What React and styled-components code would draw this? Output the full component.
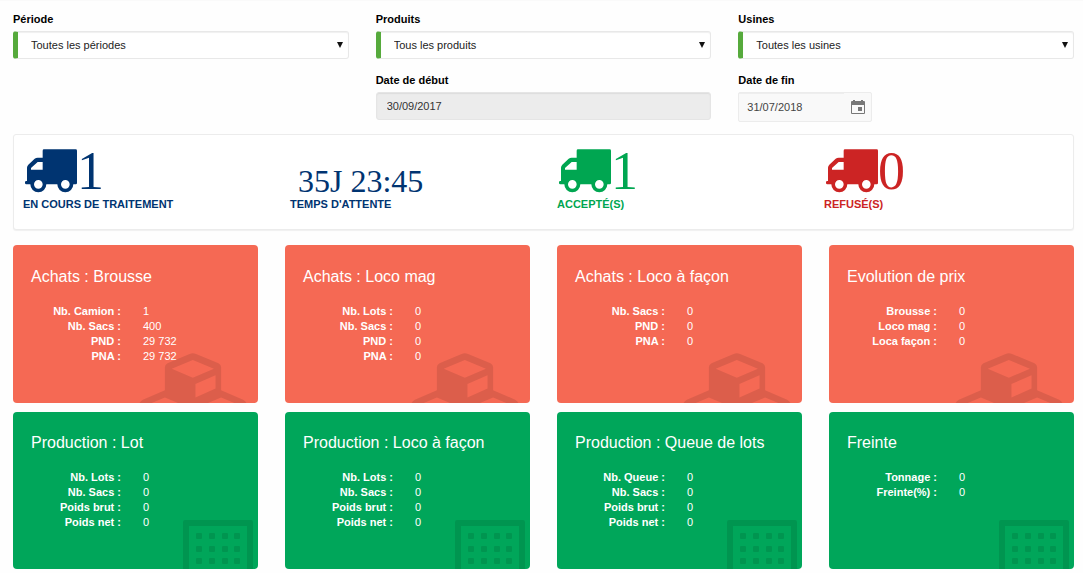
import React from "react";
import styled, { createGlobalStyle } from "styled-components";

const GlobalStyle = createGlobalStyle`
  * { box-sizing: border-box; }
  body {
    margin: 0;
    background: #fff;
    color: #000;
    font-family: "Liberation Sans", Arial, sans-serif;
    font-size: 11px;
    line-height: 15px;
  }
`;

const Page = styled.main`
  padding: 11px 9px 4px 13px;
  background: #fefefe;
  border-top: 1px solid #fafafa;
`;

const Filters = styled.form`
  display: grid;
  grid-template-columns: repeat(3, 1fr);
  column-gap: 27px;
  row-gap: 14px;
`;

const Field = styled.div`
  display: flex;
  flex-direction: column;
  align-items: stretch;
  gap: 5px;
  grid-column: ${(p) => p.$column};
`;

const FieldLabel = styled.label`
  font-weight: bold;
  line-height: 14px;
`;

const SelectBox = styled.div`
  display: grid;
  grid-template-columns: 1fr 12px;
  align-items: center;
  height: 28px;
  border: 1px solid #e8e8e8;
  border-left: 5px solid #56aa3c;
  border-radius: 3px;
  background: #fff;
  box-shadow: inset 0 1px 1px #f0f0f0;
`;

const Select = styled.select`
  appearance: none;
  grid-area: 1 / 1 / 2 / 3;
  width: 100%;
  height: 26px;
  padding: 0 20px 0 13px;
  border: 0;
  background: transparent;
  color: #222;
  font: inherit;
`;

const Arrow = styled.svg`
  grid-area: 1 / 2 / 2 / 3;
  width: 8px;
  height: 8px;
  pointer-events: none;
`;

const ReadOnlyInput = styled.input`
  width: 100%;
  height: 28px;
  padding: 0 10px;
  border: 1px solid #e5e5e5;
  border-radius: 3px;
  background: #ececec;
  box-shadow: inset 0 1px 1px #dddddd;
  color: #333;
  font: inherit;
`;

const DateBox = styled.div`
  display: flex;
  align-items: center;
  width: 134px;
  height: 30px;
  border: 1px solid #ececec;
  border-radius: 2px;
  background: #f9f9f9;
`;

const DateInput = styled.input`
  width: 105px;
  height: 28px;
  padding: 0 8px;
  border: 0;
  background: transparent;
  box-shadow: inset 0 1px 0 #eeeeee;
  color: #444;
  font: inherit;
`;

const CalendarButton = styled.button`
  display: flex;
  align-items: center;
  justify-content: center;
  width: 27px;
  height: 28px;
  padding: 0;
  border: 0;
  background: none;
`;

const Stats = styled.section`
  display: grid;
  grid-template-columns: 267fr 267fr 267fr 249fr;
  margin-top: 12px;
  padding: 14px 0 17px 9px;
  border: 1px solid #ececec;
  border-radius: 3px;
  background: #fff;
  box-shadow: 0 1px 1px #f0f0f0;
`;

const Stat = styled.div`
  color: ${(p) => p.$color};
`;

const StatFigure = styled.div`
  display: flex;
  align-items: flex-end;
  height: 44px;
  padding-left: ${(p) => (p.$plain ? 8 : 2)}px;
  font-family: "Liberation Serif", "Times New Roman", serif;
`;

const Count = styled.span`
  font-size: 54px;
  line-height: 44px;
`;

const Duration = styled.span`
  font-size: 32px;
  line-height: 24px;
`;

const StatLabel = styled.div`
  margin-top: 4px;
  font-weight: bold;
`;

const Cards = styled.section`
  display: grid;
  grid-template-columns: repeat(4, 1fr);
  gap: 9px 27px;
  margin-top: 15px;
`;

const Card = styled.article`
  position: relative;
  overflow: hidden;
  min-height: ${(p) => (p.$tone === "coral" ? 158 : 157)}px;
  padding: ${(p) => (p.$tone === "coral" ? 22 : 21)}px 18px;
  border-radius: 4px;
  background: ${(p) => (p.$tone === "coral" ? "#f56954" : "#00a65a")};
  color: #fff;
`;

const CardTitle = styled.h2`
  margin: 0 0 17px;
  font-size: 16px;
  font-weight: normal;
  line-height: 20px;
`;

const Data = styled.table`
  position: relative;
  z-index: 1;
  border-collapse: collapse;

  th {
    width: 90px;
    padding: 0;
    text-align: right;
    white-space: nowrap;
  }

  td {
    padding: 0 0 0 22px;
    white-space: nowrap;
  }
`;

const Watermark = styled.svg`
  position: absolute;
  right: ${(p) => (p.$tone === "coral" ? 11 : 5)}px;
  bottom: 0;
  fill: #000;
  fill-opacity: 0.1;
`;

const Truck = () => (
  <svg width="52" height="44" viewBox="0 0 156 132" aria-hidden="true">
    <path
      fill="currentColor"
      fillRule="evenodd"
      d="M57 1H152Q156 1 156 5V102Q156 106 152 106H145A24 24 0 0 1 97 106H64A24 24 0 0 1 16 106H4Q0 106 0 102V99Q0 96 4 96H6V56Q6 51 10 47L29 29Q33 26 38 26H53V5Q53 1 57 1ZM53 39H38L18 57V62H53ZM40 93A13 13 0 1 0 40 119A13 13 0 1 0 40 93ZM121 93A13 13 0 1 0 121 119A13 13 0 1 0 121 93Z"
    />
  </svg>
);

const CubesMark = () => (
  <Watermark $tone="coral" width="108" height="50" viewBox="0 0 325 152" aria-hidden="true">
    <path
      fillRule="evenodd"
      d="M0 152Q3 146 10 142L77 113V43Q77 35 85 31L152 3Q162-1 172 3L240 31Q248 35 248 43V113L315 142Q322 146 325 152H288L248 135L208 152H117L77 135L37 152ZM98 48L162 75L226 48L162 21ZM170 94V135L231 108V68Z"
    />
  </Watermark>
);

const BuildingMark = () => (
  <Watermark $tone="green" width="70" height="49" viewBox="0 0 70 49" aria-hidden="true">
    <path fillRule="evenodd" d="M2 0H68Q70 0 70 2V49H64V6H6V49H0V2Q0 0 2 0Z" />
    {[13, 26, 38].map((y) =>
      [13, 26, 39, 51].map((x) => (
        <rect key={`${x}-${y}`} x={x} y={y} width="6" height="6" rx="1" />
      ))
    )}
  </Watermark>
);

const CalendarIcon = () => (
  <svg width="14" height="14" viewBox="0 0 14 14" aria-hidden="true">
    <path
      fill="#777"
      fillRule="evenodd"
      d="M2 0H4V1H10V0H12V1H13Q14 1 14 2V13Q14 14 13 14H1Q0 14 0 13V2Q0 1 1 1H2ZM1 5V13H13V5ZM7 7H11V11H7Z"
    />
  </svg>
);

const selects = [
  { id: "periode", label: "Période", value: "Toutes les périodes" },
  { id: "produits", label: "Produits", value: "Tous les produits" },
  { id: "usines", label: "Usines", value: "Toutes les usines" },
];

const stats = [
  { label: "EN COURS DE TRAITEMENT", count: "1", color: "#003471" },
  { label: "TEMPS D'ATTENTE", duration: "35J 23:45", color: "#003471" },
  { label: "ACCEPTÉ(S)", count: "1", color: "#00a651" },
  { label: "REFUSÉ(S)", count: "0", color: "#cc2424" },
];

const cards = [
  {
    tone: "coral",
    title: "Achats : Brousse",
    rows: [["Nb. Camion", "1"], ["Nb. Sacs", "400"], ["PND", "29 732"], ["PNA", "29 732"]],
  },
  {
    tone: "coral",
    title: "Achats : Loco mag",
    rows: [["Nb. Lots", "0"], ["Nb. Sacs", "0"], ["PND", "0"], ["PNA", "0"]],
  },
  {
    tone: "coral",
    title: "Achats : Loco à façon",
    rows: [["Nb. Sacs", "0"], ["PND", "0"], ["PNA", "0"]],
  },
  {
    tone: "coral",
    title: "Evolution de prix",
    rows: [["Brousse", "0"], ["Loco mag", "0"], ["Loca façon", "0"]],
  },
  {
    tone: "green",
    title: "Production : Lot",
    rows: [["Nb. Lots", "0"], ["Nb. Sacs", "0"], ["Poids brut", "0"], ["Poids net", "0"]],
  },
  {
    tone: "green",
    title: "Production : Loco à façon",
    rows: [["Nb. Lots", "0"], ["Nb. Sacs", "0"], ["Poids brut", "0"], ["Poids net", "0"]],
  },
  {
    tone: "green",
    title: "Production : Queue de lots",
    rows: [["Nb. Queue", "0"], ["Nb. Sacs", "0"], ["Poids brut", "0"], ["Poids net", "0"]],
  },
  {
    tone: "green",
    title: "Freinte",
    rows: [["Tonnage", "0"], ["Freinte(%)", "0"]],
  },
];

export default function App() {
  return (
    <>
      <GlobalStyle />
      <Page>
        <Filters>
          {selects.map((s) => (
            <Field key={s.id}>
              <FieldLabel htmlFor={s.id}>{s.label}</FieldLabel>
              <SelectBox>
                <Select id={s.id}>
                  <option>{s.value}</option>
                </Select>
                <Arrow viewBox="0 0 8 8" aria-hidden="true">
                  <path d="M1 1H7L4 7Z" fill="#111" />
                </Arrow>
              </SelectBox>
            </Field>
          ))}
          <Field $column={2}>
            <FieldLabel htmlFor="debut">Date de début</FieldLabel>
            <ReadOnlyInput id="debut" readOnly value="30/09/2017" />
          </Field>
          <Field $column={3}>
            <FieldLabel htmlFor="fin">Date de fin</FieldLabel>
            <DateBox>
              <DateInput id="fin" defaultValue="31/07/2018" />
              <CalendarButton type="button" aria-label="Choisir une date">
                <CalendarIcon />
              </CalendarButton>
            </DateBox>
          </Field>
        </Filters>

        <Stats>
          {stats.map((s) => (
            <Stat key={s.label} $color={s.color}>
              <StatFigure $plain={Boolean(s.duration)}>
                {s.duration ? (
                  <Duration>{s.duration}</Duration>
                ) : (
                  <>
                    <Truck />
                    <Count>{s.count}</Count>
                  </>
                )}
              </StatFigure>
              <StatLabel>{s.label}</StatLabel>
            </Stat>
          ))}
        </Stats>

        <Cards>
          {cards.map((c) => (
            <Card key={c.title} $tone={c.tone}>
              <CardTitle>{c.title}</CardTitle>
              <Data>
                <tbody>
                  {c.rows.map(([name, value]) => (
                    <tr key={name}>
                      <th scope="row">{name} :</th>
                      <td>{value}</td>
                    </tr>
                  ))}
                </tbody>
              </Data>
              {c.tone === "coral" ? <CubesMark /> : <BuildingMark />}
            </Card>
          ))}
        </Cards>
      </Page>
    </>
  );
}
